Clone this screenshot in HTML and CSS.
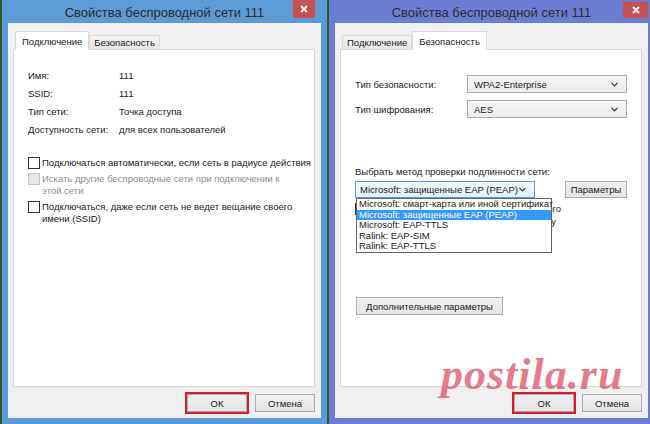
FILE: index.html
```html
<!DOCTYPE html>
<html lang="ru">
<head>
  <meta charset="UTF-8">
  <title>Свойства беспроводной сети 111</title>
  <link rel="stylesheet" href="styles.css">
</head>
<body>
  <div class="desktop">
    <!-- Left window: Connection tab -->
    <div class="window window-inactive">
      <div class="titlebar">
        <span></span>
        <div class="title">Свойства беспроводной сети 111</div>
        <div class="close">
          <svg width="8" height="8" viewBox="0 0 8 8"><path d="M1 1L7 7M7 1L1 7" stroke="#fff" stroke-width="1.8"/></svg>
        </div>
      </div>
      <div class="client">
        <div class="tabs">
          <div class="tab tab-active">Подключение</div>
          <div class="tab">Безопасность</div>
        </div>
        <div class="panel">
          <div class="info">
            <span>Имя:</span><span>111</span>
            <span>SSID:</span><span>111</span>
            <span>Тип сети:</span><span>Точка доступа</span>
            <span>Доступность сети:</span><span>для всех пользователей</span>
          </div>
          <div class="checks">
            <label class="check"><span class="box"></span><span>Подключаться автоматически, если сеть в радиусе действия</span></label>
            <label class="check check-disabled"><span class="box"></span><span>Искать другие беспроводные сети при подключении к<br>этой сети</span></label>
            <label class="check"><span class="box"></span><span>Подключаться, даже если сеть не ведет вещание своего<br>имени (SSID)</span></label>
          </div>
        </div>
        <div class="buttons">
          <button class="btn btn-marked">ОК</button>
          <button class="btn">Отмена</button>
        </div>
      </div>
    </div>

    <!-- Right window: Security tab -->
    <div class="window window-active">
      <div class="titlebar">
        <span></span>
        <div class="title">Свойства беспроводной сети 111</div>
        <div class="close">
          <svg width="8" height="8" viewBox="0 0 8 8"><path d="M1 1L7 7M7 1L1 7" stroke="#fff" stroke-width="1.8"/></svg>
        </div>
      </div>
      <div class="client">
        <div class="tabs">
          <div class="tab">Подключение</div>
          <div class="tab tab-active">Безопасность</div>
        </div>
        <div class="panel panel-security">
          <div class="form">
            <span>Тип безопасности:</span>
            <div class="select">WPA2-Enterprise<svg width="7" height="5" viewBox="0 0 7 5"><path d="M0.5 0.8L3.5 3.8L6.5 0.8" fill="none" stroke="#333" stroke-width="1.2"/></svg></div>
            <span>Тип шифрования:</span>
            <div class="select">AES<svg width="7" height="5" viewBox="0 0 7 5"><path d="M0.5 0.8L3.5 3.8L6.5 0.8" fill="none" stroke="#333" stroke-width="1.2"/></svg></div>
          </div>
          <div class="method-label">Выбрать метод проверки подлинности сети:</div>
          <div class="method-row">
            <div class="select select-open">Microsoft: защищенные EAP (PEAP)<svg width="7" height="5" viewBox="0 0 7 5"><path d="M0.5 0.8L3.5 3.8L6.5 0.8" fill="none" stroke="#333" stroke-width="1.2"/></svg></div>
            <button class="btn btn-params">Параметры</button>
            <ul class="dropdown">
              <li>Microsoft: смарт-карта или иной сертификат</li>
              <li class="selected">Microsoft: защищенные EAP (PEAP)</li>
              <li>Microsoft: EAP-TTLS</li>
              <li>Ralink: EAP-SIM</li>
              <li>Ralink: EAP-TTLS</li>
            </ul>
          </div>
          <label class="check check-remember"><span class="box"></span><span>Запоминать мои учетные данные для этого<br>подключения при каждом входе в систему</span></label>
          <button class="btn btn-advanced">Дополнительные параметры</button>
        </div>
        <div class="buttons">
          <button class="btn btn-marked">ОК</button>
          <button class="btn">Отмена</button>
        </div>
      </div>
      <div class="watermark">postila.ru</div>
    </div>
  </div>
</body>
</html>
```

FILE: styles.css
```css
body {
  margin: 0;
  width: 650px;
  height: 424px;
  overflow: hidden;
  background-color: #2f5a2b;
  font-family: "Liberation Sans", Arial, sans-serif;
  font-size: 9.5px;
  color: #1a1a1a;
}

.desktop {
  display: flex;
  gap: 2px;
  padding-left: 2px;
  height: 424px;
}

.window {
  flex: none;
  position: relative;
  width: 325px;
  height: 424px;
  box-sizing: border-box;
  border: 6px solid #5d9bd6;
  border-top: 0;
  background-color: #5d9bd6;
  display: flex;
  flex-direction: column;
}

.window-active {
  border-color: #6b7dd3;
  background-color: #6b7dd3;
}

.titlebar {
  height: 23px;
  flex: none;
  display: grid;
  grid-template-columns: 1fr auto 1fr;
  align-items: start;
}

.title {
  font-size: 13px;
  line-height: 26px;
  color: #2d2d2d;
  white-space: nowrap;
}

.close {
  justify-self: end;
  width: 22px;
  height: 18px;
  margin-right: 6px;
  background-color: #c75050;
  display: flex;
  align-items: center;
  justify-content: center;
}

.window-active .close {
  width: 25px;
  height: 16px;
  margin-top: 2px;
  margin-right: 0;
}

.client {
  flex: 1;
  background-color: #f0f0f0;
  padding: 8px 6px 0 5px;
  display: flex;
  flex-direction: column;
}

.tabs {
  position: relative;
  display: flex;
  align-items: flex-end;
  height: 19px;
  padding-left: 2px;
  margin-bottom: -1px;
}

.tab {
  height: 13px;
  line-height: 13px;
  padding: 0 4px;
  border: 1px solid #d9d9d9;
  background: linear-gradient(#f4f4f4, #e6e6e6);
  white-space: nowrap;
}

.tab-active {
  height: 17px;
  line-height: 19px;
  padding: 0 6px;
  background: #fff;
  border-bottom-color: #fff;
}

.panel {
  flex: none;
  height: 338px;
  box-sizing: border-box;
  border: 1px solid #d9d9d9;
  background-color: #fff;
  padding: 20px 14px 0;
}

.info {
  display: grid;
  grid-template-columns: 91px 1fr;
  row-gap: 6px;
  line-height: 12px;
}

.checks {
  margin-top: 21px;
  display: flex;
  flex-direction: column;
  gap: 4px;
}

.check {
  display: flex;
  align-items: flex-start;
  gap: 2px;
  line-height: 12px;
  white-space: nowrap;
}

.box {
  flex: none;
  width: 10px;
  height: 10px;
  margin-top: 0;
  border: 1px solid #333;
  background-color: #fff;
}

.check-disabled {
  color: #8d8d8d;
}

.check-disabled .box {
  border-color: #c4c4c4;
  background-color: #e6e6e6;
}

.panel-security {
  padding-top: 25px;
}

.form {
  display: grid;
  grid-template-columns: 112px 160px;
  row-gap: 7px;
  align-items: center;
}

.select {
  height: 16px;
  box-sizing: border-box;
  height: 18px;
  border: 1px solid #acacac;
  background: linear-gradient(#f7f7f7, #ececec);
  padding: 0 8px 0 6px;
  display: flex;
  align-items: center;
  justify-content: space-between;
  white-space: nowrap;
}

.method-label {
  margin-top: 48px;
  line-height: 12px;
}

.method-row {
  position: relative;
  display: flex;
  gap: 30px;
  margin-top: 3px;
}

.select-open {
  width: 180px;
  height: 17px;
  padding-left: 4px;
  border-color: #5a9be0;
  background: linear-gradient(#f3f8fd, #e4effb);
}

.dropdown {
  position: absolute;
  top: 100%;
  left: 1px;
  width: 194px;
  margin: 0;
  padding: 0;
  list-style: none;
  border: 1px solid #646464;
  background-color: #fff;
  z-index: 2;
}

.dropdown li {
  line-height: 10.6px;
  padding: 0 2px;
  white-space: nowrap;
}

.dropdown .selected {
  background-color: #3399ff;
  color: #fff;
}

.check-remember {
  margin-top: 4px;
  line-height: 13px;
}

.check-remember .box {
  margin-top: 1px;
}

.btn {
  height: 18px;
  padding: 0;
  border: 1px solid #acacac;
  background: linear-gradient(#f0f0f0, #e5e5e5);
  font: inherit;
  color: #1a1a1a;
  white-space: nowrap;
}

.btn-params {
  width: 62px;
  height: 17px;
}

.btn-advanced {
  display: block;
  width: 147px;
  margin: 69px 0 0 1px;
}

.buttons {
  display: flex;
  justify-content: flex-end;
  gap: 8px;
  margin-top: 7px;
}

.buttons .btn {
  width: 60px;
}

.btn-marked {
  outline: 2px solid #e3162a;
}

.watermark {
  position: absolute;
  left: 106px;
  top: 353px;
  font-family: "Liberation Serif", "Times New Roman", serif;
  font-size: 44px;
  font-weight: bold;
  font-style: italic;
  line-height: 1;
  letter-spacing: 1px;
  color: rgba(221, 72, 96, 0.72);
  pointer-events: none;
}
```
